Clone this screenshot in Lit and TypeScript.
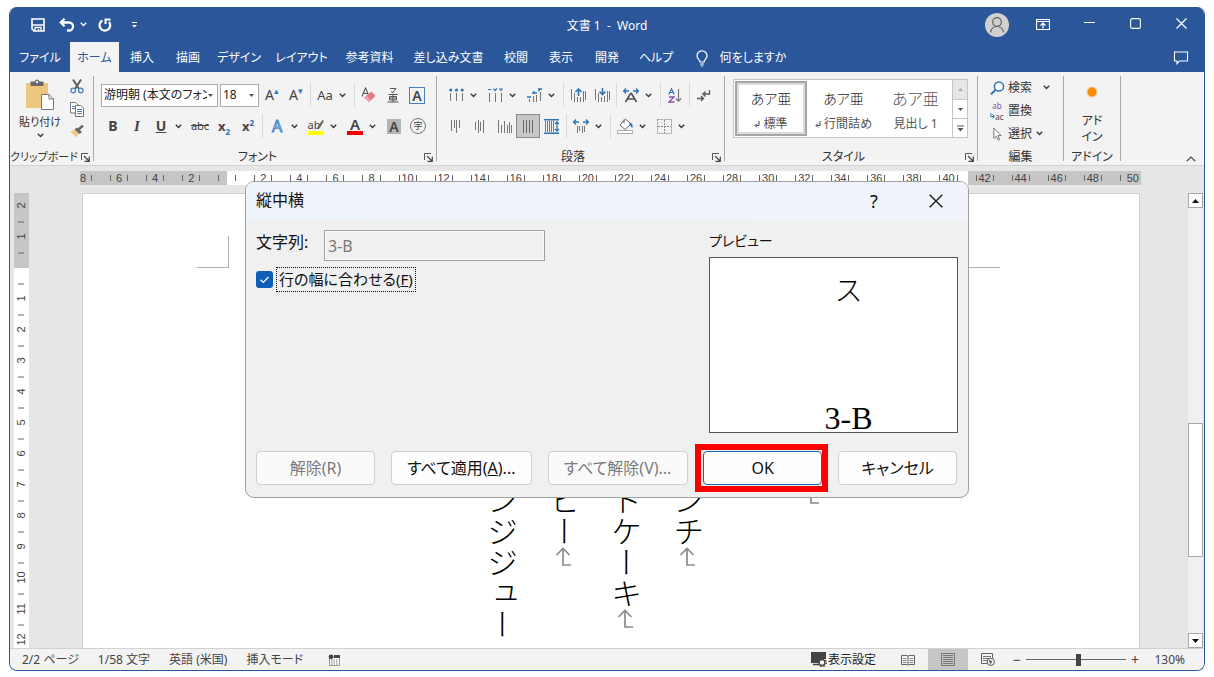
import { LitElement, html, css, svg, nothing } from "lit";
import type { TemplateResult } from "lit";
import { customElement, property } from "lit/decorators.js";
import { classMap } from "lit/directives/class-map.js";

type Drawing = { w: number; h: number; body: unknown };

const G = "#767676";
const B = "#2e75b6";

/** Row of vertical strokes, [x, top, bottom] each. */
const strokes = (list: number[][], color = G) =>
  list.map(([x, a, b]) => svg`<path d="M${x + 0.5} ${a}V${b}" stroke=${color} fill="none"/>`);

const drawings: Record<string, Drawing> = {
  save: { w: 14, h: 14, body: svg`<path d="M1 1h12v12H3L1 11z" fill="none" stroke="#fff" stroke-width="1.600"/><path d="M1 7h12" stroke="#fff" stroke-width="1.400"/><path d="M4 13V9.500h6V13M7.500 11v2" fill="none" stroke="#fff" stroke-width="1.300"/>` },
  undo: { w: 16, h: 14, body: svg`<path d="M5.500.800L1.800 4.500l3.700 3.700M2.300 4.500H10a4 4 0 0 1 0 8H8" fill="none" stroke="#fff" stroke-width="2.300"/>` },
  redo: { w: 14, h: 14, body: svg`<path d="M4.500 2.600A5.300 5.300 0 1 0 11 4" fill="none" stroke="#fff" stroke-width="2.200"/><path d="M7.500 6V1.500H12.500" fill="none" stroke="#fff" stroke-width="2"/>` },
  more: { w: 5, h: 6, body: svg`<path d="M0 .5h5" stroke="#fff"/><path d="M0 3h5L2.500 5.500z" fill="#fff"/>` },
  avatar: { w: 24, h: 24, body: svg`<circle cx="12" cy="12" r="12" fill="#d2d0ce"/><circle cx="12" cy="9" r="4.300" fill="none" stroke="#605e5c" stroke-width="1.200"/><path d="M5.500 19.500c.6-4 3-6 6.500-6s5.900 2 6.500 6" fill="none" stroke="#605e5c" stroke-width="1.200"/>` },
  display: { w: 14, h: 11, body: svg`<path d="M.5.500h13v10H.5zM.5 2.500h13M7 9.500V4.500M4.500 6.500L7 4l2.500 2.500" fill="none" stroke="#fff" stroke-width="1.200"/>` },
  min: { w: 11, h: 9, body: svg`<path d="M0 2.500h11" stroke="#fff"/>` },
  max: { w: 11, h: 13, body: svg`<rect x=".6" y=".6" width="9.800" height="9.800" rx="1.500" fill="none" stroke="#fff" stroke-width="1.100"/>` },
  close: { w: 11, h: 13, body: svg`<path d="M.5.500l10 10M10.500.500l-10 10" stroke="#fff" stroke-width="1.200"/>` },
  comment: { w: 16, h: 14, body: svg`<path d="M1.500 1h13v9H6.500L4 12.800V10H1.500z" fill="none" stroke="#fff" stroke-width="1.100"/>` },
  bulb: { w: 12, h: 17, body: svg`<path d="M4 12c0-2.500-3-3-3-6.200a5 5 0 0 1 10 0C11 9 8 9.500 8 12zM4 14h4M4.800 16h2.400" fill="none" stroke="#fff" stroke-width="1.200"/>` },
  chev: { w: 7, h: 5, body: svg`<path d="M.8.800l2.700 2.700L6.200.800" fill="none" stroke="#333" stroke-width="1.300"/>` },
  chevW: { w: 7, h: 5, body: svg`<path d="M.8.800l2.700 2.700L6.200.800" fill="none" stroke="#fff" stroke-width="1.300"/>` },
  collapse: { w: 10, h: 6, body: svg`<path d="M.8 5.200L5 1l4.200 4.200" fill="none" stroke="#444" stroke-width="1.200"/>` },
  launcher: { w: 9, h: 9, body: svg`<path d="M.5 7V.500H7" fill="none" stroke="#555"/><path d="M3 3l5 5M8.300 3.500v4.800H3.500" fill="none" stroke="#444" stroke-width="1.200"/>` },
  paste: { w: 28, h: 32, body: svg`<path d="M0 4h22v25H0z" fill="#edc67f"/><path d="M4.500 2.500h4a2.600 2.600 0 0 1 5 0h4V7h-13z" fill="#696969"/><circle cx="11" cy="3" r="1.200" fill="#f3f3f3"/><path d="M15.500 15.500H23l4.500 4.500v10.500h-12z" fill="#fff" stroke="#777"/><path d="M23 15.500V20h4.500" fill="none" stroke="#777"/>` },
  cut: { w: 14, h: 15, body: svg`<path d="M3 .5L9 10M11 .5L5 10" stroke="#5a5a5a" stroke-width="1.900" fill="none"/><circle cx="3.200" cy="11.500" r="2.300" fill="none" stroke="#4a7fbd" stroke-width="1.300"/><circle cx="10.800" cy="11.500" r="2.300" fill="none" stroke="#4a7fbd" stroke-width="1.300"/>` },
  copy: { w: 14, h: 15, body: svg`<path d="M.5.500h5l2.500 2.500v8H.5z" fill="#fff" stroke="#777"/><path d="M2 4.500h4M2 6.500h4" stroke="#4a7fbd"/><path d="M5.500 3.500h5L13.500 6v8.500h-8z" fill="#fff" stroke="#777"/><path d="M7 7.500h5M7 9.500h5M7 11.500h5" stroke="#4a7fbd"/>` },
  brush: { w: 14, h: 13, body: svg`<path d="M0 6.500l5-1.500 3.500 3.500L7 12.500z" fill="#edc67f"/><path d="M4.500 4.500L7 2.500l5 4.500-2.500 2z" fill="#666"/><path d="M8.500 4.500L13 .5" stroke="#666" stroke-width="2.400"/>` },
  eraser: { w: 16, h: 16, body: svg`<path d="M1 9.500L4.500 1 8 9M2.300 6.500h4.500" fill="none" stroke="#555" stroke-width="1.100"/><path d="M3 10.500L10.500 4.500l4 4.500L8 15z" fill="#e8788c"/><path d="M3 10.500l2.500-2 4.500 4.800L8 15z" fill="#f3a3b0"/>` },
  ruby: { w: 12, h: 16, body: svg`<path d="M3 1.500h6L6 5M4 4.500L6.500 6" fill="none" stroke="#555"/><path d="M1.500 7.500h9M.5 15h11M6 7.500V15M2.500 9.500h7v3.500h-7zM2.500 11.200h7" fill="none" stroke="#555"/>` },
  list: { w: 15, h: 14, body: svg`<g fill=${B}><circle cx="1.800" cy="2" r="1.600"/><circle cx="7.500" cy="2" r="1.600"/><circle cx="13.200" cy="2" r="1.600"/></g>${strokes([[1, 5, 13], [7, 5, 13], [13, 5, 13]])}` },
  numlist: { w: 15, h: 15, body: svg`<path d="M0 1.500h3.500M5.500 .5l1.500 2 2-2M11 1h3l-1.500 2" stroke=${B} stroke-width="1.200" fill="none"/>${strokes([[1, 5, 14], [7, 5, 14], [13, 5, 14]])}` },
  multilist: { w: 15, h: 15, body: svg`<path d="M0 9h4M5 5h5M11 1h4M7 3v3M12 .5v3" stroke=${B} stroke-width="1.400"/>${strokes([[2, 11, 14], [6, 8, 14], [9, 7, 14], [13, 4, 13]])}` },
  outdent: { w: 15, h: 15, body: svg`${strokes([[0, 1, 12], [3, 5, 14], [6, 9, 14], [9, 9, 14], [12, 3, 14], [14, 3, 12]])}<path d="M7.500 8V1M4.500 4l3-3 3 3" fill="none" stroke=${B} stroke-width="1.600"/>` },
  indent: { w: 15, h: 15, body: svg`${strokes([[0, 1, 12], [3, 5, 14], [6, 9, 14], [9, 8, 14], [12, 3, 14], [14, 3, 12]])}<path d="M7.500 0V6M4.500 3.500l3 3 3-3" fill="none" stroke=${B} stroke-width="1.600"/>` },
  scaleA: { w: 16, h: 15, body: svg`<path d="M0 3h6M10 3h6M3 .5L.7 3 3 5.500M13 .5L15.300 3 13 5.500" fill="none" stroke=${B} stroke-width="1.300"/><path d="M2.500 14L7.500 5.500h1L13.500 14M4.500 11h7" fill="none" stroke="#555" stroke-width="1.700"/>` },
  sort: { w: 14, h: 15, body: svg`<path d="M.8 6.500L3.500.800 6.200 6.500M1.800 4.500h3.500" fill="none" stroke=${B} stroke-width="1.200"/><path d="M1 9h5L1 14h5.500" fill="none" stroke="#8a4fb0" stroke-width="1.300"/><path d="M10.500 1v12M7.800 10.500l2.700 2.700 2.700-2.700" fill="none" stroke=${G} stroke-width="1.200"/>` },
  marks: { w: 14, h: 13, body: svg`<path d="M12.500 1v4H6M8.500 2.500L6 5l2.500 2.500M0 9.500h6M4 7l2.500 2.500L4 12" fill="none" stroke="#555" stroke-width="1.300"/>` },
  alTop: { w: 15, h: 15, body: strokes([[2, 1, 12], [5, 1, 9], [7, 1, 14], [10, 1, 9]]) },
  alMid: { w: 15, h: 15, body: strokes([[2, 3, 11], [5, 1, 14], [7, 3, 12], [10, 1, 14]]) },
  alBot: { w: 15, h: 15, body: strokes([[1, 1, 14], [4, 6, 14], [7, 2, 14], [10, 6, 14], [12, 3, 14], [14, 6, 14]]) },
  alJust: { w: 15, h: 15, body: strokes([[2, 1, 14], [5, 1, 14], [8, 1, 14], [11, 1, 14]], "#6a6a6a") },
  alDist: { w: 16, h: 15, body: svg`<path d="M0 .8h15M0 14.200h15" stroke=${B} stroke-width="1.400"/>${strokes([[1, 2, 13], [3, 2, 13], [5, 2, 13], [7, 2, 13], [9, 2, 13]])}<path d="M13 3v9M11 5l2-2 2 2M11 10l2 2 2-2" fill="none" stroke=${B} stroke-width="1.300"/>` },
  spacing: { w: 16, h: 15, body: svg`<path d="M0 3h6M10 3h6M3 .5L.7 3 3 5.500M13 .5L15.300 3 13 5.500" fill="none" stroke=${B} stroke-width="1.300"/>${strokes([[4, 7, 14], [6, 7, 12], [9, 7, 14], [11, 7, 13]])}` },
  bucket: { w: 17, h: 16, body: svg`<path d="M8.500 1L3 7l5 4.500L14 6z" fill="#fff" stroke="#666"/><path d="M7 1.500v4" stroke="#666"/><path d="M12.500 4.500c3 .5 3.500 2.500 3 5.500-1.500-1-2-2.500-3-3.500z" fill=${B}/><path d="M.5 12.500h15v3H.5z" fill="#fff" stroke="#aaa"/>` },
  borders: { w: 15, h: 15, body: svg`<path d="M.5.500h14v14H.5z" fill="none" stroke="#999" stroke-dasharray="2 1"/><path d="M7.500 1v13M1 7.500h13" fill="none" stroke="#888" stroke-dasharray="2 1"/>` },
  find: { w: 15, h: 14, body: svg`<circle cx="9" cy="5.500" r="4.600" fill="#fff" stroke=${B} stroke-width="1.500"/><path d="M5.500 9L1 13.200" stroke=${B} stroke-width="2"/>` },
  arrowin: { w: 5, h: 6, body: svg`<path d="M.8 0v3.500H4M2.500 1.500l2 2-2 2" fill="none" stroke=${B}/>` },
  cursor: { w: 9, h: 14, body: svg`<path d="M.8 1v10.500l2.600-2.300 1.800 4 1.500-.7-1.800-3.900h3.300z" fill="#fff" stroke="#777"/>` },
  dot: { w: 12, h: 12, body: svg`<circle cx="6" cy="6" r="5.500" fill="#f7a130" opacity=".5"/><circle cx="6" cy="6" r="4.400" fill="#ff8c00"/>` },
  up: { w: 7, h: 4, body: svg`<path d="M0 4h7L3.500 0z" fill="#111"/>` },
  down: { w: 7, h: 4, body: svg`<path d="M0 0h7L3.500 4z" fill="#111"/>` },
  downS: { w: 5, h: 3, body: svg`<path d="M0 0h5L2.500 3z" fill="#555"/>` },
  upS: { w: 5, h: 3, body: svg`<path d="M0 3h5L2.500 0z" fill="#aaa"/>` },
  moreS: { w: 7, h: 7, body: svg`<path d="M0 1h7" stroke="#555"/><path d="M.5 3h6l-3 3.500z" fill="#555"/>` },
  ret: { w: 6, h: 7, body: svg`<path d="M5 0v4.500H1.500M3 2.500l-2 2 2 2" fill="none" stroke="#444"/>` },
  para: { w: 18, h: 20, body: svg`<path d="M16 18H8V2M1.500 8L8 1.500 14.500 8" fill="none" stroke="#8a8a8a" stroke-width="1.700"/>` },
  check: { w: 17, h: 17, body: svg`<path d="M4.500 8.700l2.800 2.700L12.500 6" fill="none" stroke="#fff" stroke-width="1.300"/>` },
  dlgClose: { w: 14, h: 14, body: svg`<path d="M.7.700l12.600 12.600M13.300.700L.7 13.300" stroke="#1a1a1a" stroke-width="1.400"/>` },
  macro: { w: 12, h: 12, body: svg`<path d="M1.500 3.500h10v8h-10z" fill="#fff" stroke="#999"/><path d="M6 1h6v3H6z" fill="#444"/><circle cx="3" cy="2.800" r="2.400" fill="#444"/><path d="M3 6h7M3 8h7M3 10h7" stroke="#777" stroke-dasharray="1.500 1"/>` },
  screen: { w: 16, h: 15, body: svg`<path d="M0 0h15v7h-4l-3 4H0z" fill="#444"/><path d="M2 12.500h5" stroke="#444" stroke-width="1.500"/><circle cx="11" cy="10.500" r="3" fill="#f3f3f3" stroke="#444" stroke-width="1.400"/><circle cx="11" cy="10.500" r="4.300" fill="none" stroke="#444" stroke-width="1.200" stroke-dasharray="1.700 1.700"/>` },
  read: { w: 14, h: 12, body: svg`<path d="M.5 1.500H6l1 .8 1-.8h5.500v9H8l-1 1-1-1H.5zM7 2v9" fill="none" stroke="#666"/><path d="M2 4.500h3.500M2 6.500h3.500M2 8.500h3.500M8.500 4.500H12M8.500 6.500H12M8.500 8.500H12" stroke="#888"/>` },
  print: { w: 14, h: 13, body: svg`<path d="M.5.500h13v12H.5z" fill="none" stroke="#777"/><path d="M2 2.500h10M2 4.500h10M2 6.500h10M2 8.500h10M2 10.500h10" stroke="#777"/>` },
  web: { w: 14, h: 13, body: svg`<path d="M6 10.500H.5v-10h11V5" fill="none" stroke="#666"/><path d="M2 3.500h8M2 5.500h6M2 7.500h4" stroke="#777"/><circle cx="9.800" cy="8.800" r="3.600" fill="#f3f3f3" stroke="#555"/><path d="M8 7l3 1-1 3-1.500-1.500zM11 6l1.500 2" fill="#555"/>` },
};

const icon = (name: string) => {
  const d = drawings[name];
  return html`<svg width=${d.w} height=${d.h} viewBox="0 0 ${d.w} ${d.h}" aria-hidden="true">${d.body}</svg>`;
};

type Tool = { label: string; face: TemplateResult; split?: boolean; on?: boolean } | "sep";

const face = (name: string) => icon(name);
const glyph = (cls: string, inner: unknown) => html`<span class=${cls}>${inner}</span>`;

const fontRow1: Tool[] = [
  { label: "フォント サイズの拡大", face: glyph("ga", html`A<sup class="blue">▴</sup>`) },
  { label: "フォント サイズの縮小", face: glyph("ga", html`A<sup class="blue">▾</sup>`) },
  "sep",
  { label: "文字種の変換", face: glyph("gaa", "Aa"), split: true },
  "sep",
  { label: "書式のクリア", face: face("eraser") },
  { label: "ルビ", face: face("ruby") },
  { label: "囲み線", face: glyph("boxed", "A") },
];
const fontRow2: Tool[] = [
  { label: "太字", face: glyph("bold", "B") },
  { label: "斜体", face: glyph("ital", "I") },
  { label: "下線", face: glyph("under", "U"), split: true },
  { label: "取り消し線", face: glyph("strike", "abc") },
  { label: "下付き", face: glyph("xs", html`x<sub>2</sub>`) },
  { label: "上付き", face: glyph("xs", html`x<sup>2</sup>`) },
  "sep",
  { label: "文字の効果", face: glyph("glow", "A"), split: true },
  { label: "蛍光ペン", face: glyph("mark", html`ab<svg width="7" height="11" viewBox="0 0 7 11"><path d="M0 10l1-3L5.500 1l1.500 1-4 6.500z" fill="#666" /></svg>`), split: true },
  { label: "フォントの色", face: glyph("red", "A"), split: true },
  { label: "文字の網かけ", face: glyph("shade", "A") },
  { label: "囲い文字", face: glyph("ring", "字") },
];
const paraRow1: Tool[] = [
  { label: "箇条書き", face: face("list"), split: true },
  { label: "段落番号", face: face("numlist"), split: true },
  { label: "アウトライン", face: face("multilist"), split: true },
  "sep",
  { label: "インデントを減らす", face: face("outdent") },
  { label: "インデントを増やす", face: face("indent") },
  "sep",
  { label: "拡張書式", face: face("scaleA"), split: true },
  "sep",
  { label: "並べ替え", face: face("sort") },
  "sep",
  { label: "編集記号", face: face("marks") },
];
const paraRow2: Tool[] = [
  { label: "上揃え", face: face("alTop") },
  { label: "上下中央揃え", face: face("alMid") },
  { label: "下揃え", face: face("alBot") },
  { label: "両端揃え", face: face("alJust"), on: true },
  { label: "均等割り付け", face: face("alDist") },
  "sep",
  { label: "行と段落の間隔", face: face("spacing"), split: true },
  "sep",
  { label: "塗りつぶし", face: face("bucket"), split: true },
  { label: "罫線", face: face("borders"), split: true },
];

const shared = css`
  * { box-sizing: border-box; }
  svg { display: block; flex: none; }
  button {
    font: inherit; color: inherit; background: none; border: 0; padding: 0; margin: 0;
    font-feature-settings: inherit;
    display: flex; align-items: center; justify-content: center;
  }
`;

@customElement("tool-row")
class ToolRow extends LitElement {
  static styles = [shared, css`
    :host { display: flex; align-items: center; height: 24px; }
    .tool { width: 24px; height: 24px; flex: none; }
    .split { width: 39px; justify-content: flex-start; gap: 2px; }
    .split .face { width: 24px; }
    .face { display: flex; align-items: center; justify-content: center; }
    .on { background: #c8c8c8; border: 1px solid #8a8a8a; }
    .sep { width: 1px; height: 24px; background: #d8d8d8; margin: 0 2px; flex: none; }
    span span { line-height: 16px; color: #444; font-size: 14px; }
    sup, sub { line-height: 0; font-size: 8px; }
    .blue { color: #2e75b6; font-size: 9px; }
    .ga { font-size: 14px; white-space: nowrap; }
    .gaa { font-size: 13px; }
    .bold { font-weight: 700; }
    .ital { font-weight: 700; font-style: italic; font-family: "Liberation Serif", serif; font-size: 15px; }
    .under { font-weight: 700; text-decoration: underline; }
    .strike { font-size: 11px; text-decoration: line-through; }
    .xs { font-weight: 700; font-size: 13px; white-space: nowrap; }
    .xs sub, .xs sup { color: #2e75b6; }
    .glow { color: #fff; font-size: 16px; -webkit-text-stroke: 1px #4a86c8; }
    .mark { border-bottom: 4px solid #ffff00; font-size: 11px; line-height: 13px; display: flex; align-items: center; white-space: nowrap; width: 16px; justify-content: center; }
    .mark svg { margin-left: -3px; }
    .red { border-bottom: 4px solid #f00000; font-size: 15px; line-height: 14px; font-weight: 600; width: 16px; text-align: center; }
    .boxed { border: 1px solid #4a7fbd; width: 16px; height: 17px; font-weight: 600; text-align: center; line-height: 15px; }
    .shade { background: #b4b4b4; width: 14px; height: 15px; font-weight: 600; text-align: center; line-height: 15px; }
    .ring { border: 1px solid #777; border-radius: 50%; width: 16px; height: 16px; font-size: 9px; line-height: 14px; text-align: center; }
  `];
  @property({ attribute: false }) tools: Tool[] = [];
  render() {
    return this.tools.map((t) =>
      t === "sep"
        ? html`<span class="sep"></span>`
        : html`<button class=${classMap({ tool: true, split: !!t.split, on: !!t.on })} aria-label=${t.label}>
            <span class="face">${t.face}</span>${t.split ? icon("chev") : nothing}
          </button>`
    );
  }
}

const tabs = ["ファイル", "ホーム", "挿入", "描画", "デザイン", "レイアウト", "参考資料", "差し込み文書", "校閲", "表示", "開発", "ヘルプ"];

const rulerLabels = [6, 4, 2, 0, ...Array.from({ length: 24 }, (_, i) => (i + 1) * 2)];
const vLabels = [2, 1, 0, ...Array.from({ length: 12 }, (_, i) => i + 1)];

const columns: { text: string; mark: boolean }[] = [
  { text: "ンジジュー", mark: false },
  { text: "ヒー", mark: true },
  { text: "トケーキ", mark: true },
  { text: "ンチ", mark: true },
  { text: "", mark: false },
  { text: "", mark: true },
];

@customElement("app-root")
class AppRoot extends LitElement {
  static styles = [shared, css`
    :host {
      display: block; box-sizing: border-box; height: 100vh; padding: 7px 9px 6px; background: #fff; overflow: hidden;
      font-family: "Noto Sans", "Noto Sans CJK JP", sans-serif; font-size: 12px; line-height: 16px;
      font-feature-settings: "palt"; color: #333;
    }
    .window {
      height: 100%; display: flex; flex-direction: column; position: relative;
      border: 1px solid #2b579a; border-top: 0; border-radius: 8px; overflow: hidden; background: #e6e6e6;
    }
    .title { display: grid; grid-template-columns: 1fr auto 1fr; align-items: center; height: 35px; flex: none; background: #2b579a; color: #fff; }
    .title > span { padding-top: 2px; }
    .quick { display: flex; align-items: center; padding-left: 21px; }
    .quick button { margin-right: 14px; }
    .quick .undo { gap: 5px; margin-right: 11px; }
    .quick .redo { margin-right: 20px; }
    .caption { display: flex; justify-content: flex-end; align-items: center; }
    .caption button { width: 46px; height: 32px; }
    .tabs {
      display: grid; background: #2b579a; color: #fff; height: 30px; flex: none; align-items: stretch;
      grid-template-columns: 60px 49px 46px 46px 56px 69px 67px 91px 44px 46px 46px 52px 118px 1fr;
    }
    .tabs button { white-space: nowrap; padding-top: 2px; }
    .tabs .active { background: #f3f3f3; color: #2b579a; }
    .tabs .tell { gap: 12px; }
    .tabs .cmt { justify-self: end; width: 46px; }
    .ribbon {
      display: grid; height: 94px; flex: none; background: #f3f3f3; border-bottom: 1px solid #d2d2d2; padding-top: 4px;
      grid-template-columns: 84px 343px 288px 253px 86px 57px 1fr;
    }
    .group {
      display: flex; flex-direction: column; min-width: 0; padding-right: 1px;
      background: linear-gradient(#a8a8a8, #a8a8a8) 100% 0 / 1px calc(100% - 4px) no-repeat;
    }
    .group > .tools { flex: 1; min-height: 0; }
    .foot { display: flex; height: 16px; align-items: center; white-space: nowrap; color: #333; }
    .foot span { flex: 1; text-align: center; }
    .foot button { width: 15px; height: 16px; }
    .small { font-size: 11px; }
    .clip { display: grid; grid-template-columns: 60px 24px; }
    .paste { flex-direction: column; justify-content: flex-start; gap: 4px; padding-top: 3px; white-space: nowrap; line-height: 14px; }
    .side { display: flex; flex-direction: column; gap: 8px; padding-top: 3px; align-items: flex-start; }
    .rows { display: flex; flex-direction: column; gap: 7px; padding: 7px 0 0 7px; }
    .line { display: flex; align-items: center; gap: 2px; }
    .line tool-row { margin-left: -1px; }
    .combo { display: grid; height: 23px; }
    .combo select {
      grid-area: 1 / 1; appearance: none; border: 1px solid #ababab; border-radius: 0; background: #fff; color: #222;
      font: inherit; font-size: 12px; font-feature-settings: inherit; padding: 0 10px 0 2px; margin: 0; width: 100%; min-width: 0;
    }
    .combo svg { grid-area: 1 / 1; place-self: center end; margin-right: 5px; pointer-events: none; }
    .name { width: 117px; }
    .size { width: 39px; }
    .gallery { display: grid; grid-template-columns: 74px 71px 1fr 15px; margin: 3px 9px 0 8px; height: 59px; border: 1px solid #c6c6c6; background: #fff; }
    .style { flex-direction: column; gap: 8px; padding-top: 5px; color: #555; white-space: nowrap; min-width: 0; }
    .style b { font-weight: 300; font-size: 14px; line-height: 18px; color: #222; }
    .style span { display: flex; gap: 3px; align-items: center; }
    .style.big b { font-size: 16px; color: #555; }
    .style.cur { border: 2px solid #a6a6a6; box-shadow: inset 0 0 0 2px #dcdcdc; margin: 1px; }
    .scroll { display: grid; grid-template-rows: repeat(3, 1fr); border-left: 1px solid #c6c6c6; }
    .scroll button + button { border-top: 1px solid #c6c6c6; }
    .scroll button:first-child { background: #e6e6e6; }
    .edit { display: flex; flex-direction: column; padding: 0 0 0 11px; }
    .edit button { height: 23px; justify-content: flex-start; gap: 3px; }
    .edit .ic { width: 16px; display: flex; justify-content: center; font-size: 8px; line-height: 11px; flex-direction: column; align-items: center; color: #444; }
    .edit .ic i { font-style: normal; display: flex; align-items: center; height: 11px; }
    .edit .p { color: #8a4fb0; }
    .edit .far { margin-left: 8px; }
    .edit .near { margin-left: 1px; }
    .addin { display: flex; flex-direction: column; align-items: center; gap: 15px; padding-top: 6px; }
    .rest { display: flex; align-items: flex-end; justify-content: flex-end; padding: 0 8px 3px 0; }

    .work { flex: 1; min-height: 0; display: grid; grid-template: 27px minmax(0, 1fr) / 4px 15px 53px minmax(0, 1fr) 48px 15px; padding-right: 1px; }
    .hruler {
      grid-area: 1 / 4; margin: 5px -1px 0 -2px; height: 14px; display: flex; overflow: hidden;
      font: 11px/14px "Liberation Sans", sans-serif; color: #444;
      background: linear-gradient(90deg, #c6c6c6 147px, #fff 147px, #fff calc(100% - 173px), #c6c6c6 calc(100% - 173px));
    }
    .cell { flex: 1 1 0; min-width: 0; padding: 0 9px; display: flex; justify-content: space-between; align-items: center; }
    .cell i, .vruler i { background: #666; }
    .cell i { width: 1px; height: 6px; }
    .cell span { width: 0; display: flex; justify-content: center; }
    .cell.first { flex-grow: .5; padding-left: 3px; }
    .cell.last { flex-grow: .72; padding-right: 8px; }
    .vruler {
      grid-area: 2 / 2; padding-top: 5px; display: flex; flex-direction: column; overflow: hidden;
      font: 11px/15px "Liberation Sans", sans-serif; color: #444;
      background: linear-gradient(#c6c6c6 75px, #fff 75px);
    }
    .vruler span { flex: 1; min-height: 0; display: flex; align-items: center; justify-content: center; writing-mode: vertical-rl; transform: rotate(180deg); }
    .vruler i { height: 1px; width: 6px; }
    .vruler em { font-style: normal; height: 0; display: flex; justify-content: center; align-items: center; }
    .page { grid-area: 2 / 4; background: #fff; border: 1px solid #d0d0d0; border-bottom: 0; overflow: hidden; display: flex; flex-direction: column; }
    .crops { display: flex; justify-content: space-between; padding: 42px 139px 0 114px; flex: none; }
    .crops i { width: 32px; height: 32px; border: 0 solid #b0b0b0; border-bottom-width: 1px; }
    .crops i:first-child { border-right-width: 1px; }
    .crops i:last-child { border-left-width: 1px; }
    .body { display: flex; justify-content: center; padding: 217px 0 0 92px; font-feature-settings: normal; flex: none; }
    .col {
      margin: 0; writing-mode: vertical-rl; width: 62px; font: 300 31px/62px "Noto Sans CJK JP", sans-serif; color: #000;
      display: flex; align-items: center; white-space: nowrap;
    }
    .vbar { grid-area: 2 / 6; display: flex; flex-direction: column; background: #f0f0f0; }
    .vbar button { height: 15px; background: #fff; border: 1px solid #a8a8a8; flex: none; }
    .gapA { flex: 215; }
    .thumb { flex: 133; background: #fff; border: 1px solid #a8a8a8; }
    .gapB { flex: 76; }

    .status { display: flex; align-items: center; height: 22px; flex: none; background: #f3f3f3; border-top: 1px solid #d2d2d2; color: #444; padding: 0 19px 0 12px; white-space: nowrap; }
    .status .left { display: flex; align-items: center; gap: 19px; flex: 1; }
    .left button { margin-left: 6px; }
    .status button { height: 21px; }
    .views { display: flex; }
    .views button { width: 40px; }
    .views .on { background: #c6c6c6; }
    .disp { gap: 1px; margin-right: 12px; color: #222; }
    .zoom { display: flex; align-items: center; }
    .zoom > button { width: 18px; font-size: 14px; }
    .zoom input { appearance: none; width: 100px; height: 14px; margin: 0; background: linear-gradient(#666, #666) 0 50% / 100% 1px no-repeat; }
    .zoom input::-webkit-slider-thumb { appearance: none; width: 5px; height: 12px; background: #444; }
    .pct { width: 41px; text-align: right; }

    .dialog {
      position: absolute; top: 174px; left: 50%; transform: translateX(-50%); width: 724px; height: 317px;
      display: flex; flex-direction: column; background: #f0f0f0; border: 1px solid #a0a0a0; border-radius: 9px;
      overflow: hidden; color: #111; font-size: 16px; line-height: 24px;
    }
    .dtitle { display: flex; align-items: center; height: 39px; background: linear-gradient(90deg, #eef3f9, #f0f3fa); padding-left: 10px; }
    .dtitle span { flex: 1; padding-bottom: 3px; }
    .dtitle button { width: 60px; height: 38px; font-size: 18px; padding-bottom: 2px; }
    .dtitle button:last-child { width: 64px; }
    .dbody { flex: 1; display: grid; grid-template-columns: minmax(0, 1fr) 249px; padding: 8px 10px 0; }
    .field { display: grid; grid-template-columns: 68px 221px; align-items: start; margin-top: 1px; }
    .field input { height: 31px; border: 1px solid #a0a0a0; background: #f0f0f0; color: #7a7a7a; font: inherit; padding: 0 3px; border-radius: 0; box-shadow: inset 0 0 0 1px #fafafa; }
    .fit { display: flex; align-items: center; gap: 3px; margin-top: 6px; font-size: 15px; }
    .box { display: grid; }
    .box > * { grid-area: 1 / 1; }
    .box input { appearance: none; width: 17px; height: 17px; margin: 0; background: #0f5fb8; border-radius: 3px; }
    .box svg { pointer-events: none; }
    .fit label { border: 1px dotted #111; padding: 0 2px; line-height: 23px; white-space: nowrap; }
    .prev { display: flex; flex-direction: column; font-size: 14px; }
    .canvas {
      margin-top: 4px; height: 176px; background: #fff; border: 1px solid #555; display: flex; flex-direction: column; align-items: center; justify-content: space-between;
      padding: 18px 0 0 30px; overflow: hidden; color: #000;
      font: 300 28px/32px "Liberation Serif", "Noto Sans CJK JP", serif;
    }
    .canvas span:last-child { font-size: 32px; line-height: 28px; }
    .btns { display: grid; grid-template-columns: 119px 141px 140px 119px 119px; justify-content: space-between; padding: 0 11px 12px 10px; }
    .btns button { height: 34px; background: #fdfdfd; border: 1px solid #cfcfcf; border-radius: 4px; white-space: nowrap; }
    .btns button:disabled { color: #7a7a7a; background: #fafafa; }
    .btns .ok { border: 1px solid #1464b4; }
    .hit { display: grid; position: relative; }
    .hit::after { content: ""; position: absolute; inset: -7px -6px -7px -8px; border: 6px solid #f90000; pointer-events: none; }
  `];

  private foot(name: string, launch = true) {
    return html`<div class="foot"><span>${name}</span>${launch ? html`<button aria-label="${name} の設定">${icon("launcher")}</button>` : nothing}</div>`;
  }

  private ribbon() {
    return html`<div class="ribbon">
      <section class="group small">
        <div class="tools clip">
          <button class="paste">${icon("paste")}<span>貼り付け</span>${icon("chev")}</button>
          <div class="side">
            <button aria-label="切り取り">${icon("cut")}</button>
            <button aria-label="コピー">${icon("copy")}</button>
            <button aria-label="書式のコピー">${icon("brush")}</button>
          </div>
        </div>
        ${this.foot("クリップボード")}
      </section>
      <section class="group">
        <div class="tools rows">
          <div class="line">
            <div class="combo name"><select aria-label="フォント"><option>游明朝 (本文のフォント)</option></select>${icon("downS")}</div>
            <div class="combo size"><select aria-label="フォント サイズ"><option>18</option></select>${icon("downS")}</div>
            <tool-row .tools=${fontRow1}></tool-row>
          </div>
          <tool-row .tools=${fontRow2}></tool-row>
        </div>
        ${this.foot("フォント")}
      </section>
      <section class="group">
        <div class="tools rows">
          <tool-row .tools=${paraRow1}></tool-row>
          <tool-row .tools=${paraRow2}></tool-row>
        </div>
        ${this.foot("段落")}
      </section>
      <section class="group">
        <div class="tools">
          <div class="gallery">
            <button class="style cur"><b>あア亜</b><span>${icon("ret")}標準</span></button>
            <button class="style"><b>あア亜</b><span>${icon("ret")}行間詰め</span></button>
            <button class="style big"><b>あア亜</b><span>見出し 1</span></button>
            <div class="scroll">
              <button aria-label="前へ">${icon("upS")}</button>
              <button aria-label="次へ">${icon("downS")}</button>
              <button aria-label="その他">${icon("moreS")}</button>
            </div>
          </div>
        </div>
        ${this.foot("スタイル")}
      </section>
      <section class="group">
        <div class="tools edit">
          <button><span class="ic">${icon("find")}</span>検索<span class="far">${icon("chev")}</span></button>
          <button><span class="ic"><i class="p">ab</i><i>${icon("arrowin")}ac</i></span>置換</button>
          <button><span class="ic">${icon("cursor")}</span>選択<span class="near">${icon("chev")}</span></button>
        </div>
        ${this.foot("編集", false)}
      </section>
      <section class="group">
        <button class="tools addin">${icon("dot")}<span>アド<br />イン</span></button>
        ${this.foot("アドイン", false)}
      </section>
      <div class="rest"><button aria-label="リボンを折りたたむ">${icon("collapse")}</button></div>
    </div>`;
  }

  private work() {
    return html`<main class="work">
      <div class="hruler">
        <div class="cell first"><span>8</span><i></i></div>
        ${rulerLabels.map((n) => html`<div class="cell"><i></i><span>${n || nothing}</span><i></i></div>`)}
        <div class="cell last"><i></i><span>50</span></div>
      </div>
      <div class="vruler">
        ${vLabels.map((n, k) => html`<span><em>${n || nothing}</em></span>${k < vLabels.length - 1 ? html`<span><i></i></span>` : nothing}`)}
      </div>
      <article class="page">
        <div class="crops"><i></i><i></i></div>
        <div class="body">
          ${columns.map((c) => html`<p class="col"><span>${c.text}</span>${c.mark ? icon("para") : nothing}</p>`)}
        </div>
      </article>
      <div class="vbar">
        <button aria-label="上へスクロール">${icon("up")}</button>
        <div class="gapA"></div><div class="thumb"></div><div class="gapB"></div>
        <button aria-label="下へスクロール">${icon("down")}</button>
      </div>
    </main>`;
  }

  private dialog() {
    return html`<div class="dialog" role="dialog" aria-label="縦中横">
      <header class="dtitle"><span>縦中横</span><button>?</button><button aria-label="閉じる">${icon("dlgClose")}</button></header>
      <div class="dbody">
        <div>
          <div class="field"><label for="str">文字列:</label><input id="str" value="3-B" disabled /></div>
          <div class="fit">
            <span class="box"><input type="checkbox" id="fit" checked />${icon("check")}</span>
            <label for="fit">行の幅に合わせる(<u>F</u>)</label>
          </div>
        </div>
        <div class="prev"><span>プレビュー</span><div class="canvas"><span>ス</span><span>3-B</span></div></div>
      </div>
      <footer class="btns">
        <button disabled>解除(R)</button>
        <button><span>すべて適用(<u>A</u>)...</span></button>
        <button disabled>すべて解除(V)...</button>
        <div class="hit"><button class="ok">OK</button></div>
        <button>キャンセル</button>
      </footer>
    </div>`;
  }

  render() {
    return html`<div class="window">
      <header class="title">
        <div class="quick">
          <button aria-label="上書き保存">${icon("save")}</button>
          <button class="undo" aria-label="元に戻す">${icon("undo")}${icon("chevW")}</button>
          <button class="redo" aria-label="繰り返し">${icon("redo")}</button>
          <button aria-label="カスタマイズ">${icon("more")}</button>
        </div>
        <span>文書 1&nbsp; -&nbsp; Word</span>
        <div class="caption">
          <button aria-label="アカウント">${icon("avatar")}</button>
          <button aria-label="リボンの表示オプション">${icon("display")}</button>
          <button aria-label="最小化">${icon("min")}</button>
          <button aria-label="最大化">${icon("max")}</button>
          <button aria-label="閉じる">${icon("close")}</button>
        </div>
      </header>
      <nav class="tabs">
        ${tabs.map((t, i) => html`<button class=${classMap({ active: i === 1 })}>${t}</button>`)}
        <button class="tell">${icon("bulb")}何をしますか</button>
        <button class="cmt" aria-label="コメント">${icon("comment")}</button>
      </nav>
      ${this.ribbon()} ${this.work()}
      <footer class="status">
        <div class="left"><span>2/2 ページ</span><span>1/58 文字</span><span>英語 (米国)</span><span>挿入モード</span><button aria-label="マクロの記録">${icon("macro")}</button></div>
        <button class="disp">${icon("screen")}表示設定</button>
        <div class="views">
          <button aria-label="閲覧モード">${icon("read")}</button>
          <button class="on" aria-label="印刷レイアウト">${icon("print")}</button>
          <button aria-label="Web レイアウト">${icon("web")}</button>
        </div>
        <div class="zoom">
          <button aria-label="縮小">−</button>
          <input type="range" min="0" max="100" value="53" aria-label="ズーム" />
          <button aria-label="拡大">+</button>
        </div>
        <span class="pct">130%</span>
      </footer>
      ${this.dialog()}
    </div>`;
  }
}
